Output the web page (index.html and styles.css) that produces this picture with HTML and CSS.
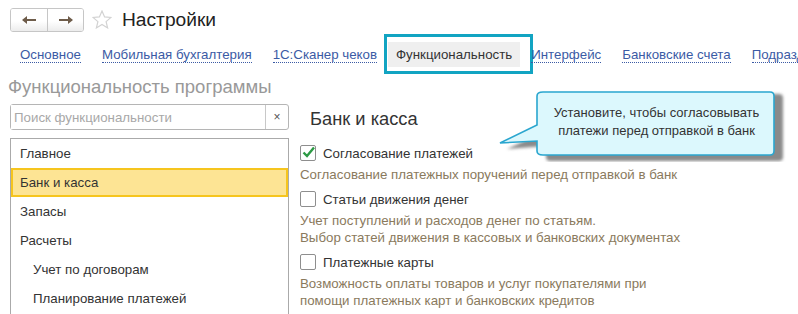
FILE: index.html
```html
<!DOCTYPE html>
<html lang="ru">
<head>
    <meta charset="UTF-8">
    <title>Настройки</title>
    <link rel="stylesheet" href="styles.css">
</head>
<body>
    <div id="page">
        <div class="header">
            <div class="nav-buttons">
                <button class="nav-btn">
                    <svg width="16" height="10" viewBox="0 0 16 10"><path d="M1 5 L6 1 L6 4 L15 4 L15 6 L6 6 L6 9 Z" fill="#6e5c4a"/></svg>
                </button>
                <button class="nav-btn">
                    <svg width="16" height="10" viewBox="0 0 16 10"><path d="M15 5 L10 1 L10 4 L1 4 L1 6 L10 6 L10 9 Z" fill="#6e5c4a"/></svg>
                </button>
            </div>
            <svg class="star" width="20" height="19" viewBox="0 0 20 19"><path d="M10 1 L12.6 6.9 L19 7.4 L14.1 11.6 L15.6 17.9 L10 14.5 L4.4 17.9 L5.9 11.6 L1 7.4 L7.4 6.9 Z" fill="none" stroke="#d2d2d2" stroke-width="1.2"/></svg>
            <h1 class="title">Настройки</h1>
        </div>

        <div class="tabs">
            <a class="tab">Основное</a>
            <a class="tab">Мобильная бухгалтерия</a>
            <a class="tab">1С:Сканер чеков</a>
            <span class="tab-frame"><span class="tab-active">Функциональность</span></span>
            <a class="tab">Интерфейс</a>
            <a class="tab">Банковские счета</a>
            <a class="tab">Подразделения</a>
        </div>

        <div class="main">
            <div class="left">
                <h2 class="section-title">Функциональность программы</h2>
                <div class="search">
                    <input type="text" placeholder="Поиск функциональности">
                    <span class="search-clear">×</span>
                </div>
                <ul class="sections">
                    <li>Главное</li>
                    <li class="selected">Банк и касса</li>
                    <li>Запасы</li>
                    <li>Расчеты</li>
                    <li class="sub">Учет по договорам</li>
                    <li class="sub">Планирование платежей</li>
                </ul>
            </div>

            <div class="right">
                <h3 class="group-title">Банк и касса</h3>

                <div class="option">
                    <label class="option-check"><span class="checkbox checked">
                        <svg width="15" height="15" viewBox="0 0 15 15"><path d="M2.5 7.5 L6 11 L13 2.5" fill="none" stroke="#2d9a45" stroke-width="2.4"/></svg>
                    </span>Согласование платежей</label>
                    <p class="option-desc">Согласование платежных поручений перед отправкой в банк</p>
                </div>

                <div class="option">
                    <label class="option-check"><span class="checkbox"></span>Статьи движения денег</label>
                    <p class="option-desc">Учет поступлений и расходов денег по статьям.<br>Выбор статей движения в кассовых и банковских документах</p>
                </div>

                <div class="option">
                    <label class="option-check"><span class="checkbox"></span>Платежные карты</label>
                    <p class="option-desc">Возможность оплаты товаров и услуг покупателями при<br>помощи платежных карт и банковских кредитов</p>
                </div>
            </div>
        </div>

        <div class="callout">
            <svg width="290" height="76" viewBox="0 0 290 76">
                <defs>
                    <filter id="blur" x="-10%" y="-10%" width="120%" height="130%">
                        <feGaussianBlur stdDeviation="1.6"/>
                    </filter>
                </defs>
                <path d="M47 9 Q47 5 51 5 L280 5 Q284 5 284 9 L284 68 Q284 72 280 72 L51 72 Q47 72 47 68 L47 57 L8 60 L47 42 Z" fill="#8a8a8a" filter="url(#blur)" transform="translate(3 3)"/>
                <path d="M41 10 Q41 6 47 6 L274 6 Q278 6 278 10 L278 65 Q278 69 274 69 L47 69 Q41 69 41 65 L41 55 L4 57 L41 39 Z" fill="#dcf8fd" stroke="#2aa6cf" stroke-width="1.6"/>
            </svg>
            <div class="callout-text">Установите, чтобы согласовывать<br>платежи перед отправкой в банк</div>
        </div>
    </div>
</body>
</html>
```

FILE: styles.css
```css
body {
    margin: 0;
    font-family: "Liberation Sans", Arial, sans-serif;
    font-size: 13.3px;
    color: #333;
    background: #fff;
    overflow: hidden;
}

#page {
    position: relative;
    width: 798px;
    height: 314px;
    overflow: hidden;
}

.header {
    display: flex;
    align-items: center;
    padding: 8px 0 0 10px;
    height: 23px;
}

.nav-buttons {
    display: flex;
    border: 1px solid #c6c6c6;
    border-radius: 3px;
    overflow: hidden;
}

.nav-btn {
    width: 36px;
    height: 22px;
    padding: 0;
    border: none;
    background: linear-gradient(#ffffff, #ffffff 55%, #ececec);
    display: flex;
    align-items: center;
    justify-content: center;
}

.nav-btn + .nav-btn {
    border-left: 1px solid #c6c6c6;
}

.star {
    margin-left: 8px;
}

.title {
    margin: 0 0 0 10px;
    font-size: 19.2px;
    font-weight: normal;
    color: #222;
}

.tabs {
    display: flex;
    align-items: center;
    white-space: nowrap;
    margin-top: 3px;
    padding-left: 20px;
    height: 42px;
}

.tab {
    color: #3b5ba5;
    border-bottom: 1px dotted #3b5ba5;
    line-height: 14px;
    margin-right: 21px;
}

.tab-frame {
    border: 3px solid #12a4c2;
    padding: 5px 10px 4px 1px;
    margin-left: -14px;
    margin-right: -2px;
    margin-top: -2px;
}

.tab-active {
    display: block;
    background: #efefef;
    padding: 5px 8px 5px 8px;
    color: #333;
}

.main {
    display: flex;
}

.left {
    width: 281px;
    padding-left: 8px;
}

.section-title {
    margin: 0;
    font-size: 18.5px;
    font-weight: normal;
    color: #999;
    line-height: 22px;
}

.search {
    display: flex;
    margin: 6px 0 0 2px;
    height: 24px;
    border: 1px solid #b5b5b5;
    border-radius: 3px;
}

.search input {
    flex: 1;
    border: none;
    outline: none;
    padding: 0 3px;
    font-family: inherit;
    font-size: 13.3px;
    min-width: 0;
}

.search input::placeholder {
    color: #a8a8a8;
}

.search-clear {
    width: 22px;
    border-left: 1px solid #c8c8c8;
    text-align: center;
    line-height: 24px;
    font-size: 12px;
    color: #555;
}

.sections {
    list-style: none;
    margin: 8px 0 0 2px;
    padding: 0;
    border: 1px solid #aaa;
    border-bottom: none;
    height: 200px;
}

.sections li {
    height: 29px;
    line-height: 29px;
    padding-left: 9px;
    color: #333;
}

.sections li.selected {
    background: #fde494;
    border: 2px solid #f6c51e;
    height: 25px;
    line-height: 25px;
    padding-left: 7px;
}

.sections li.sub {
    padding-left: 22px;
}

.right {
    padding-left: 11px;
}

.group-title {
    margin: 33px 0 0 10px;
    font-size: 18.3px;
    font-weight: normal;
    line-height: 20px;
    color: #333;
}

.option {
    margin-bottom: 8px;
}

.group-title + .option {
    margin-top: 16px;
}

.option-check {
    display: flex;
    align-items: center;
    height: 16px;
    color: #333;
}

.checkbox {
    width: 14px;
    height: 14px;
    border: 1px solid #8e8e8e;
    border-radius: 2px;
    margin-right: 7px;
    position: relative;
    background: #fff;
}

.checkbox svg {
    position: absolute;
    left: 0;
    top: -1px;
}

.option-desc {
    margin: 5px 0 0;
    line-height: 17px;
    color: #8a7a5d;
}

.callout {
    position: absolute;
    left: 496px;
    top: 86px;
    width: 290px;
    height: 76px;
}

.callout svg {
    position: absolute;
    left: 0;
    top: 0;
}

.callout-text {
    position: absolute;
    left: 43px;
    top: 18px;
    width: 235px;
    text-align: center;
    font-size: 13px;
    line-height: 18px;
    color: #333;
}
```
